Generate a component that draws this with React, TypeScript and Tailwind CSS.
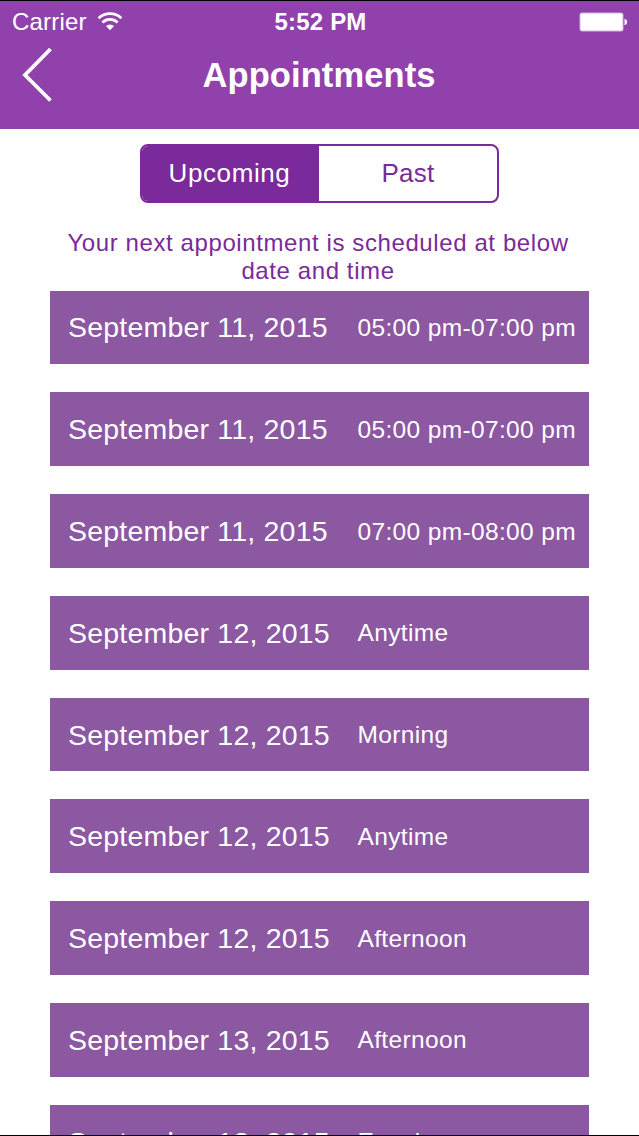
interface Appointment {
  date: string
  time: string
}

const APPOINTMENTS: Appointment[] = [
  { date: 'September 11, 2015', time: '05:00 pm-07:00 pm' },
  { date: 'September 11, 2015', time: '05:00 pm-07:00 pm' },
  { date: 'September 11, 2015', time: '07:00 pm-08:00 pm' },
  { date: 'September 12, 2015', time: 'Anytime' },
  { date: 'September 12, 2015', time: 'Morning' },
  { date: 'September 12, 2015', time: 'Anytime' },
  { date: 'September 12, 2015', time: 'Afternoon' },
  { date: 'September 13, 2015', time: 'Afternoon' },
  { date: 'September 13, 2015', time: 'Evening' },
]

function WifiIcon() {
  return (
    <svg width="26" height="20" viewBox="0 0 26 20" fill="none" stroke="white" strokeWidth="2.8">
      <path d="M1.6 6.2a16.400 16.400 0 0 1 22.800 0" />
      <path d="M5.400 10.400a11 11 0 0 1 15.200 0" />
      <path d="M13 18.200l-4-4.200a6 6 0 0 1 8 0z" fill="white" stroke="none" />
    </svg>
  )
}

function BatteryIcon() {
  return (
    <svg width="50" height="20" viewBox="0 0 50 20">
      <rect x="0.5" y="0.5" width="44" height="19" rx="2.5" fill="white" fillOpacity="0.6" />
      <rect x="1.500" y="1.500" width="42" height="17" rx="1.500" fill="white" />
      <path d="M45.500 6.800c3.600.6 3.600 5.800 0 6.400z" fill="white" />
    </svg>
  )
}

function StatusBar() {
  return (
    <div className="grid h-10 grid-cols-3 items-center pl-3 pr-[10px] text-[24px] leading-[40px] text-white">
      <div className="flex items-center gap-[10px]">
        <span className="pt-px tracking-[0.2px]">Carrier</span>
        <WifiIcon />
      </div>
      <span className="whitespace-nowrap pt-px text-center font-bold tracking-[0.2px]">5:52 PM</span>
      <div className="flex justify-end">
        <BatteryIcon />
      </div>
    </div>
  )
}

function Header() {
  return (
    <header className="h-[128.5px] border-t border-black bg-[#9141ac]">
      <StatusBar />
      <div className="grid h-[68px] grid-cols-[60px_1fr_60px] items-center">
        <button className="pl-[21px]" aria-label="Back">
          <svg width="32" height="56" viewBox="0 0 32 56" fill="none" stroke="white" strokeWidth="3.8">
            <path d="M29.500 2L4 28l25.500 25.500" />
          </svg>
        </button>
        <h1 className="pr-px text-center text-[34.5px] font-bold leading-[68px] tracking-[0.1px] text-white">
          Appointments
        </h1>
      </div>
    </header>
  )
}

function SegmentedControl() {
  return (
    <div className="ml-[140px] mt-[15.5px] grid h-[59px] w-[359px] grid-cols-[177px_1fr] overflow-hidden rounded-[8px] border-2 border-[#7b2a9b] bg-white text-[26px] leading-[55px] text-[#7b2a9b]">
      <button className="bg-[#7b2a9b] pr-[2px] tracking-[0.6px] text-white">Upcoming</button>
      <button className="tracking-[0.3px]">Past</button>
    </div>
  )
}

function AppointmentRow({ date, time }: Appointment) {
  return (
    <li className="flex h-[73.7px] shrink-0 items-center bg-[#8b58a1] pl-[18px] text-white">
      <span className="w-[289.5px] shrink-0 whitespace-nowrap pt-px text-[28.5px] tracking-[0.2px]">{date}</span>
      <span className="whitespace-nowrap pt-[2px] text-[24.5px] tracking-[0.35px]">{time}</span>
    </li>
  )
}

export default function App() {
  return (
    <div className="flex h-[1136px] w-[639px] flex-col overflow-hidden border-b border-black bg-white font-['Liberation_Sans',Arial,sans-serif]">
      <div className="shrink-0">
        <Header />
        <SegmentedControl />
        <p className="mx-auto mt-[26px] w-[540px] pr-[3px] text-center text-[24px] leading-[28px] tracking-[0.6px] text-[#7b2a9b]">
          Your next appointment is scheduled at below date and time
        </p>
      </div>
      <ul className="mx-[50px] mt-[5.500px] flex min-h-0 flex-col gap-[28.1px]">
        {APPOINTMENTS.map((appointment, i) => (
          <AppointmentRow key={i} {...appointment} />
        ))}
      </ul>
    </div>
  )
}
